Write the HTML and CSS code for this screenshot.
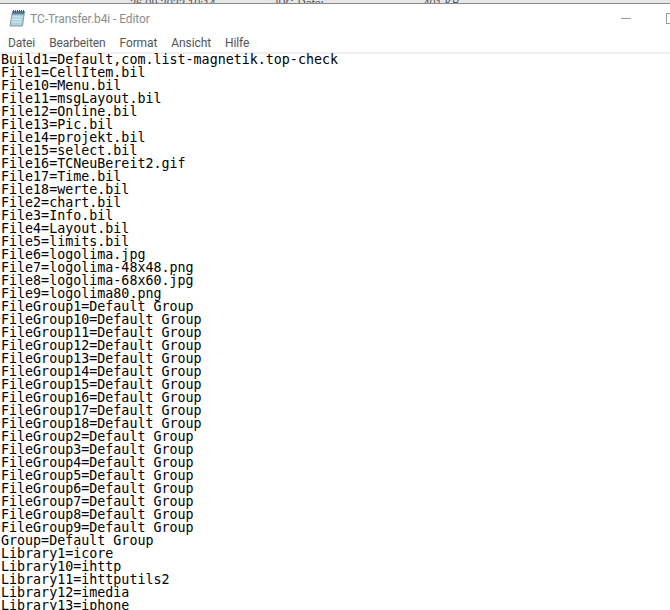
FILE: index.html
```html
<!DOCTYPE html>
<html lang="de">
<head>
<meta charset="utf-8">
<title>TC-Transfer.b4i - Editor</title>
<link rel="stylesheet" href="styles.css">
</head>
<body>
<div class="behind">
<span class="b-date">26.09.2022 10:14</span><span class="b-type">JPG-Datei</span><span class="b-size">401 KB</span>
</div>
<div class="window">
<header class="titlebar">
<svg class="app-icon" width="16" height="18" viewBox="0 0 16 18">
<path d="M3.5 2.5h12L13.5 17H1z" fill="#a9d3e0" stroke="#8c9a8f" stroke-width="1"/>
<path d="M3.5 2.5h12l-.6 3H3z" fill="#5f7f95"/>
<path d="M4.5 1v3M6.5 1v3M8.5 1v3M10.5 1v3M12.5 1v3M14.5 1v3" stroke="#555" stroke-width="1"/>
<path d="M3 8h10M2.7 10.5h10M2.4 13h10" stroke="#d7ecf2" stroke-width="1"/>
</svg>
<span class="title">TC-Transfer.b4i - Editor</span>
<div class="controls">
<span class="minimize"></span>
<span class="maximize"></span>
</div>
</header>
<nav class="menubar">
<span>Datei</span><span>Bearbeiten</span><span>Format</span><span>Ansicht</span><span>Hilfe</span>
</nav>
<pre class="content">Build1=Default,com.list-magnetik.top-check
File1=CellItem.bil
File10=Menu.bil
File11=msgLayout.bil
File12=Online.bil
File13=Pic.bil
File14=projekt.bil
File15=select.bil
File16=TCNeuBereit2.gif
File17=Time.bil
File18=werte.bil
File2=chart.bil
File3=Info.bil
File4=Layout.bil
File5=limits.bil
File6=logolima.jpg
File7=logolima-48x48.png
File8=logolima-68x60.jpg
File9=logolima80.png
FileGroup1=Default Group
FileGroup10=Default Group
FileGroup11=Default Group
FileGroup12=Default Group
FileGroup13=Default Group
FileGroup14=Default Group
FileGroup15=Default Group
FileGroup16=Default Group
FileGroup17=Default Group
FileGroup18=Default Group
FileGroup2=Default Group
FileGroup3=Default Group
FileGroup4=Default Group
FileGroup5=Default Group
FileGroup6=Default Group
FileGroup7=Default Group
FileGroup8=Default Group
FileGroup9=Default Group
Group=Default Group
Library1=icore
Library10=ihttp
Library11=ihttputils2
Library12=imedia
Library13=iphone</pre>
</div>
</body>
</html>
```
FILE: styles.css
```css
html, body {
  margin: 0;
  padding: 0;
  width: 670px;
  height: 610px;
  overflow: hidden;
  background: #fff;
}
.behind {
  height: 3px;
  overflow: hidden;
  background: #e6e6e6;
  display: flex;
  font: 11px/7px "Liberation Sans", sans-serif;
  color: #555;
}
.b-date { margin-left: 130px; }
.b-type { margin-left: 57px; }
.b-size { margin-left: 100px; }
.window {
  border-top: 1px solid #8a8a8a;
  height: 606px;
  overflow: hidden;
}
.titlebar {
  height: 31px;
  display: flex;
  align-items: center;
  padding-left: 9px;
  background: #fff;
}
.app-icon { margin-right: 5px; margin-top: -3px; }
.title {
  font: 12px Roboto, "Liberation Sans", sans-serif;
  letter-spacing: -0.08px;
  color: #8c8c8c;
  margin-top: -1px;
}
.controls {
  margin-left: auto;
  display: flex;
  align-items: center;
  margin-top: -3px;
}
.minimize {
  width: 10px;
  height: 1px;
  background: #999;
  margin-right: 35px;
}
.maximize {
  width: 9px;
  height: 9px;
  border: 1px solid #999;
  margin-right: -7px;
}
.menubar {
  height: 17px;
  display: flex;
  gap: 14px;
  padding-left: 8px;
  font: 12px/17px Roboto, "Liberation Sans", sans-serif;
  letter-spacing: -0.1px;
  color: #555;
  border-bottom: 2px solid #f0f0f0;
}
.content {
  margin: 0;
  padding-left: 1px;
  font: 13.33px/13px "DejaVu Sans Mono", monospace;
  color: #000;
  white-space: pre;
  position: relative;
  top: -1px;
}
```
